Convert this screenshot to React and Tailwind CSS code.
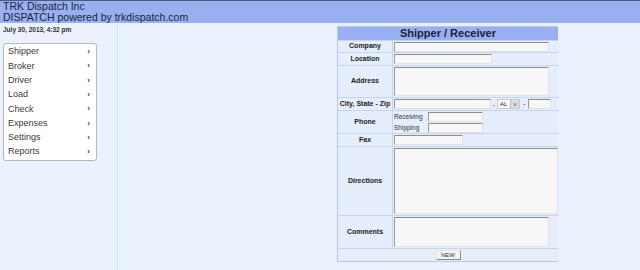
import React from 'react';

const menuItems = ['Shipper', 'Broker', 'Driver', 'Load', 'Check', 'Expenses', 'Settings', 'Reports'];

const inputCls = 'bg-[#f7f7f7] border border-t-[#8c8c8c] border-l-[#9a9a9a] border-r-[#e2e2e2] border-b-[#e2e2e2]';
const labelCls = 'bg-[#e6eefc] flex items-center justify-center text-[7px] font-bold text-[#222]';
const cellCls = 'bg-[#e6eefc] flex items-center pl-[1px]';

const Row = ({ label, h, children }) => (
  <>
    <div className={labelCls} style={{ height: h }}>{label}</div>
    <div className={cellCls} style={{ height: h }}>{children}</div>
  </>
);

const App = () => {
  return (
    <div className="w-[640px] h-[270px] bg-[#e9f1fd] overflow-hidden font-['Liberation_Sans',Arial,sans-serif] text-[#222]">
      {/* HEADER */}
      <div className="h-[23px] bg-[#98b0f0] border-t border-[#4a5a80] pl-[3px] text-[10.5px] leading-[11px] text-[#1c2440]">
        <div>TRK Dispatch Inc</div>
        <div>DISPATCH powered by trkdispatch.com</div>
      </div>

      <div className="flex h-[247px]">
        {/* LEFT COLUMN */}
        <div className="w-[118px] border-r border-[#d6e2f6] bg-[#eaf2fe] pl-[3px]">
          <div className="text-[6.5px] leading-[8px] font-bold text-[#333] pt-[3px]">July 30, 2013, 4:32 pm</div>
          <div className="mt-[9px] w-[94px] bg-white border border-[#b4b8c0] rounded-[3px] pt-[1px] pb-[1px]">
            {menuItems.map((item) => (
              <div key={item} className="h-[14.3px] flex items-center justify-between pl-[4px] pr-[6px] text-[9px] text-[#3a3a3a]">
                <span>{item}</span>
                <span className="text-[8px] font-bold">›</span>
              </div>
            ))}
          </div>
        </div>

        {/* FORM */}
        <div className="flex-1">
          <div className="ml-[219px] mt-[3px] w-[221px] border border-[#b8c8e8] bg-[#c6d4ee] grid grid-cols-[54px_165px] gap-px">
            <div className="col-span-2 h-[13px] bg-[#98b0f0] flex items-center justify-center text-[11px] font-bold text-[#1a1f3a]">
              Shipper / Receiver
            </div>

            <Row label="Company" h={11}>
              <div className={`${inputCls} w-[155px] h-[10px]`} />
            </Row>
            <Row label="Location" h={12}>
              <div className={`${inputCls} w-[98px] h-[10px]`} />
            </Row>
            <Row label="Address" h={31}>
              <div className={`${inputCls} w-[155px] h-[29px]`} />
            </Row>
            <Row label="City, State - Zip" h={12}>
              <div className={`${inputCls} w-[97px] h-[10px]`} />
              <span className="text-[7px] mx-[2px]">,</span>
              <div className="flex items-center h-[10px] w-[23px] bg-[#f7f7f7] border border-[#c8c8c8] text-[6px] pl-[2px]">
                <span className="flex-1">AL</span>
                <span className="w-[9px] h-[8px] bg-[#dcdcdc] border-l border-[#bcbcbc] flex items-center justify-center text-[6px] text-[#555]">v</span>
              </div>
              <span className="text-[7px] mx-[3px]">-</span>
              <div className={`${inputCls} w-[23px] h-[10px]`} />
            </Row>
            <Row label="Phone" h={22}>
              <div className="flex flex-col gap-[1px] text-[6.5px] text-[#333]">
                <div className="flex items-center">
                  <span className="w-[34px]">Receiving</span>
                  <div className={`${inputCls} w-[55px] h-[10px]`} />
                </div>
                <div className="flex items-center">
                  <span className="w-[34px]">Shipping</span>
                  <div className={`${inputCls} w-[55px] h-[10px]`} />
                </div>
              </div>
            </Row>
            <Row label="Fax" h={12}>
              <div className={`${inputCls} w-[69px] h-[10px]`} />
            </Row>
            <Row label="Directions" h={68}>
              <div className={`${inputCls} w-[164px] h-[66px]`} />
            </Row>
            <Row label="Comments" h={32}>
              <div className={`${inputCls} w-[155px] h-[30px]`} />
            </Row>

            <div className="col-span-2 h-[12px] bg-[#e6eefc] flex items-center justify-center">
              <div className="h-[10px] w-[25px] bg-[#f4f4f4] border border-t-[#e8e8e8] border-l-[#e8e8e8] border-r-[#888] border-b-[#888] flex items-center justify-center text-[6px] text-[#333]">
                NEW
              </div>
            </div>
          </div>
        </div>
      </div>
    </div>
  );
};

export default App;
